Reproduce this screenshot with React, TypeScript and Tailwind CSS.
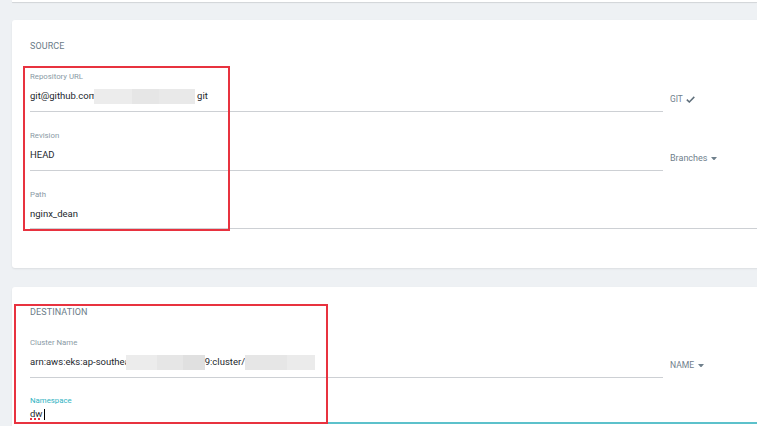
import React from "react";

const Check = () => (
  <svg width="9" height="7" viewBox="0 0 9 7" className="ml-[3px] inline-block">
    <path d="M0.8 3.6 L3.3 6 L8.3 0.9" fill="none" stroke="#5f6f7b" strokeWidth="1.5" />
  </svg>
);

const Caret = () => (
  <svg width="6" height="3.5" viewBox="0 0 6 3.5" className="ml-[4px] inline-block">
    <path d="M0 0 L6 0 L3 3.5 Z" fill="#6f808c" />
  </svg>
);

const Blur = ({ w, c }: { w: number; c: string }) => (
  <span className="inline-block h-[15px] align-middle" style={{ width: w, background: c }} />
);

const Field = ({
  label,
  children,
  side,
}: {
  label: string;
  children: React.ReactNode;
  side?: React.ReactNode;
}) => (
  <div className="flex">
    <div className={`${side ? "w-[633px]" : "flex-1"} border-b border-[#cdd0d4] pb-[7px]`}>
      <div className="text-[7.8px] leading-[10px] text-[#8a9aa5]">{label}</div>
      <div className="mt-[7px] flex h-[14px] items-center text-[9.5px] leading-[14px] text-[#24282e]">
        {children}
      </div>
    </div>
    {side && (
      <div className="flex h-[40px] items-center pl-[7px] pt-[15px] text-[8.5px] text-[#6f808c]">{side}</div>
    )}
  </div>
);

export default function App() {
  return (
    <div className="min-h-screen w-full overflow-hidden bg-[#eef1f4] font-['Roboto',sans-serif]">
      <div className="ml-[12px] h-[2px] bg-white shadow-[0_1px_1px_rgba(0,0,0,0.12)]" />

      <div className="flex flex-col gap-[19px] pl-[12px] pt-[18px]">
        {/* Source */}
        <div className="relative w-[820px] rounded-[3px] bg-white pb-[39px] pl-[18px] pr-[20px] pt-[20px] shadow-[0_1px_2px_rgba(0,0,0,0.08)]">
          <div className="text-[9px] leading-[12px] tracking-[0.1px] text-[#6b7c88]">SOURCE</div>

          <div className="mt-[20px] flex flex-col gap-[19px]">
            <Field
              label="Repository URL"
              side={
                <span className="flex items-center text-[8.4px]">
                  GIT
                  <Check />
                </span>
              }
            >
              <span>git@github.com</span>
              <span className="-ml-[3px] flex">
                <Blur w={38} c="#ececec" />
                <Blur w={27} c="#e6e6e6" />
                <Blur w={36} c="#e9e9e9" />
              </span>
              <span className="ml-[2px]">git</span>
            </Field>

            <Field
              label="Revision"
              side={
                <span className="flex items-center text-[9px]">
                  Branches
                  <Caret />
                </span>
              }
            >
              <span>HEAD</span>
            </Field>

            <Field label="Path">
              <span>nginx_dean</span>
            </Field>
          </div>

          <div className="pointer-events-none absolute left-[11px] top-[46px] h-[165px] w-[207px] border-2 border-[#e8323f]" />
        </div>

        {/* Destination */}
        <div className="relative w-[820px] rounded-[3px] bg-white pb-[40px] pl-[18px] pr-[20px] pt-[19px] shadow-[0_1px_2px_rgba(0,0,0,0.08)]">
          <div className="text-[9px] leading-[12px] tracking-[0.1px] text-[#6b7c88]">DESTINATION</div>

          <div className="mt-[20px] flex flex-col gap-[18px]">
            <Field
              label="Cluster Name"
              side={
                <span className="flex items-center text-[8.6px]">
                  NAME
                  <Caret />
                </span>
              }
            >
              <span>arn:aws:eks:ap-southea</span>
              <span className="-ml-[4px] flex">
                <Blur w={31} c="#ececec" />
                <Blur w={26} c="#e6e6e6" />
                <Blur w={22} c="#e0e0e0" />
              </span>
              <span>9:cluster/r</span>
              <span className="-ml-[3px] flex">
                <Blur w={42} c="#e6e6e6" />
                <Blur w={28} c="#ebebeb" />
              </span>
            </Field>

            <div className="border-b-2 border-[#5cc1cb] pb-[1px]">
              <div className="text-[7.8px] leading-[10px] text-[#2fb3c2]">Namespace</div>
              <div className="mt-[1px] flex h-[14px] items-center text-[9.5px] leading-[14px] text-[#24282e]">
                <span className="underline decoration-[#e8323f] decoration-dotted decoration-[1.5px] underline-offset-[1px]">
                  dw
                </span>
                <span className="ml-[1px] h-[11px] w-px bg-black" />
              </div>
            </div>
          </div>

          <div className="pointer-events-none absolute left-[2px] top-[17px] h-[120px] w-[314px] border-2 border-[#e8323f]" />
        </div>
      </div>
    </div>
  );
}
